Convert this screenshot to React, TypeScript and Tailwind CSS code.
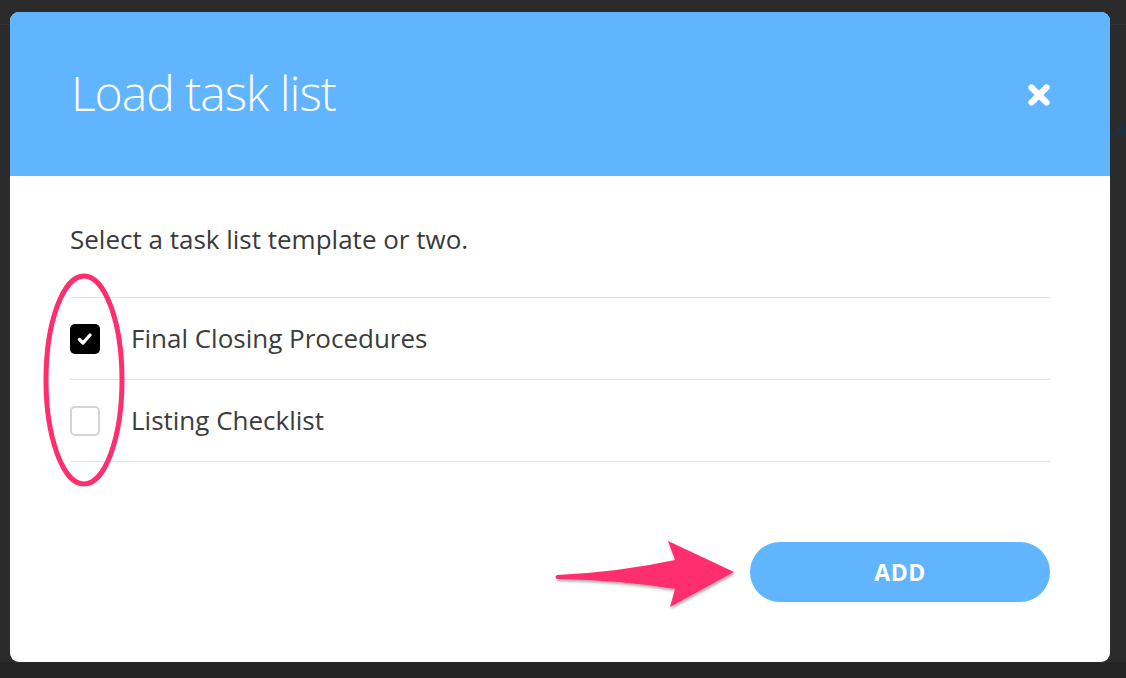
import { X } from 'lucide-react';

const templates = [
  { name: 'Final Closing Procedures', checked: true },
  { name: 'Listing Checklist', checked: false },
];

function CheckMark() {
  return (
    <svg width="16" height="14" viewBox="0 0 16 14">
      <path d="M2.5 7.5 L6 11 L13 3" fill="none" stroke="white" strokeWidth="3.4" strokeLinecap="round" strokeLinejoin="round" />
    </svg>
  );
}

export default function App() {
  return (
    <div
      className="relative w-[1126px] h-[678px] overflow-hidden bg-[#2b2b2b] pt-[12px] pl-[10px]"
      style={{ fontFamily: '"Open Sans", "Noto Sans", sans-serif' }}
    >
      {/* faint page behind the overlay */}
      <div className="absolute left-0 right-0 top-[24px] h-px bg-[#333333]" />
      <div className="absolute left-0 right-0 bottom-0 h-[16px] bg-[#242424]" />
      <span className="absolute left-[1106px] top-[116px] text-[18px] font-bold text-[#1c3047]">LA</span>

      {/* modal */}
      <div className="relative w-[1100px] h-[650px] bg-white rounded-[9px] overflow-hidden flex flex-col">
        <div className="h-[164px] bg-[#61b5fe] flex items-center justify-between pl-[61px] pr-[56px] shrink-0">
          <h2 className="text-[48px] font-[350] text-white tracking-[-1px] leading-none mt-[-2px]">Load task list</h2>
          <X className="w-[30px] h-[30px] text-white mt-[2px]" strokeWidth={5} />
        </div>

        <div className="flex-1 flex flex-col px-[60px]">
          <p className="text-[26px] text-[#3a3a3a] mt-[45px] leading-[36px]">Select a task list template or two.</p>

          <div className="mt-[40px] border-t border-[#e3e3e3]">
            {templates.map((t) => (
              <div key={t.name} className="h-[82px] border-b border-[#e3e3e3] flex items-center gap-[31px]">
                {t.checked ? (
                  <div className="w-[30px] h-[30px] rounded-[5px] bg-black flex items-center justify-center">
                    <CheckMark />
                  </div>
                ) : (
                  <div className="w-[30px] h-[30px] rounded-[5px] border-2 border-[#d4d4d4] bg-white" />
                )}
                <span className="text-[26px] text-[#3c3c3c]">{t.name}</span>
              </div>
            ))}
          </div>

          <div className="flex justify-end mt-[80px]">
            <button className="w-[300px] h-[60px] rounded-full bg-[#61b5fe] text-white text-[23px] font-bold tracking-[0.5px]">
              ADD
            </button>
          </div>
        </div>
      </div>

      {/* annotations */}
      <svg className="absolute left-[40px] top-[270px]" width="90" height="220" viewBox="0 0 90 220">
        <ellipse cx="44" cy="110" rx="38" ry="104" fill="none" stroke="#ff2f6e" strokeWidth="5" />
      </svg>
      <svg className="absolute left-[550px] top-[535px]" width="200" height="80" viewBox="0 0 200 80">
        <defs>
          <filter id="sh" x="-10%" y="-20%" width="130%" height="150%">
            <feDropShadow dx="1" dy="2" stdDeviation="1.5" floodColor="#000" floodOpacity="0.35" />
          </filter>
        </defs>
        <path
          d="M7 40 Q70 37 125 25 L118 6 L184 37 L120 72 L125 54 Q70 45 7 44 Q4 42 7 40 Z"
          fill="#ff2f6e"
          filter="url(#sh)"
        />
      </svg>
    </div>
  );
}
